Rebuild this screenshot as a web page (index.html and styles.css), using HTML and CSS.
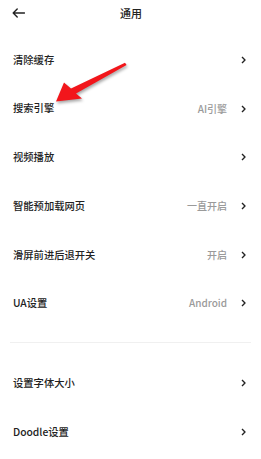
FILE: index.html
```html
<!DOCTYPE html>
<html lang="zh">
<head>
<meta charset="utf-8">
<link rel="stylesheet" href="styles.css">
</head>
<body>
<div class="page">
  <header class="header">
    <svg class="back" width="13" height="10" viewBox="0 0 13 10"><path d="M12.5 5H1.2M5.2 1L1.2 5L5.2 9" fill="none" stroke="#222" stroke-width="1.4" stroke-linecap="round" stroke-linejoin="round"/></svg>
    <div class="title">通用</div>
  </header>
  <div class="group first">
    <div class="row"><span class="label">清除缓存</span><span class="right"><svg class="chev" width="5" height="8" viewBox="0 0 5 8"><path d="M1 1L4 4L1 7" fill="none" stroke="#222" stroke-width="1.4" stroke-linejoin="round"/></svg></span></div>
    <div class="row"><span class="label">搜索引擎</span><span class="right"><span class="value">AI引擎</span><svg class="chev" width="5" height="8" viewBox="0 0 5 8"><path d="M1 1L4 4L1 7" fill="none" stroke="#222" stroke-width="1.4" stroke-linejoin="round"/></svg></span></div>
    <div class="row"><span class="label">视频播放</span><span class="right"><svg class="chev" width="5" height="8" viewBox="0 0 5 8"><path d="M1 1L4 4L1 7" fill="none" stroke="#222" stroke-width="1.4" stroke-linejoin="round"/></svg></span></div>
    <div class="row"><span class="label">智能预加载网页</span><span class="right"><span class="value">一直开启</span><svg class="chev" width="5" height="8" viewBox="0 0 5 8"><path d="M1 1L4 4L1 7" fill="none" stroke="#222" stroke-width="1.4" stroke-linejoin="round"/></svg></span></div>
    <div class="row"><span class="label">滑屏前进后退开关</span><span class="right"><span class="value">开启</span><svg class="chev" width="5" height="8" viewBox="0 0 5 8"><path d="M1 1L4 4L1 7" fill="none" stroke="#222" stroke-width="1.4" stroke-linejoin="round"/></svg></span></div>
    <div class="row"><span class="label">UA设置</span><span class="right"><span class="value">Android</span><svg class="chev" width="5" height="8" viewBox="0 0 5 8"><path d="M1 1L4 4L1 7" fill="none" stroke="#222" stroke-width="1.4" stroke-linejoin="round"/></svg></span></div>
  </div>
  <div class="divider"></div>
  <div class="group">
    <div class="row"><span class="label">设置字体大小</span><span class="right"><svg class="chev" width="5" height="8" viewBox="0 0 5 8"><path d="M1 1L4 4L1 7" fill="none" stroke="#222" stroke-width="1.4" stroke-linejoin="round"/></svg></span></div>
    <div class="row"><span class="label">Doodle设置</span><span class="right"><svg class="chev" width="5" height="8" viewBox="0 0 5 8"><path d="M1 1L4 4L1 7" fill="none" stroke="#222" stroke-width="1.4" stroke-linejoin="round"/></svg></span></div>
  </div>
  <svg class="pointer" width="261" height="120" viewBox="0 0 261 120"><polygon points="125,62.8 126.6,65 76,93.5 82,98.5 56,101.5 64,82.5 71,88.5" fill="#f2161b"/></svg>
</div>
</body>
</html>
```
FILE: styles.css
```css
* { box-sizing: border-box; }
html, body { margin: 0; padding: 0; background: #fff; }
body {
  font-family: "Noto Sans CJK SC", "Noto Sans", sans-serif;
  color: #222;
}
.page {
  position: relative;
  width: 261px;
  height: 459px;
  overflow: hidden;
}
.header {
  height: 26px;
  display: flex;
  align-items: center;
  justify-content: center;
  position: relative;
}
.back {
  position: absolute;
  left: 12px;
  top: 8px;
}
.title {
  font-size: 11px;
  font-weight: 500;
  line-height: 1;
  margin-left: 1px;
}
.group.first { padding-top: 9.6px; }
.row {
  height: 48.7px;
  display: flex;
  align-items: center;
  justify-content: space-between;
  padding: 0 15px 0 13px;
}
.label {
  font-size: 10.3px;
  font-weight: 500;
  line-height: 1;
}
.right {
  display: flex;
  align-items: center;
}
.value {
  font-size: 10px;
  color: #9a9a9a;
  line-height: 1;
  margin-right: 14px;
  font-weight: 500;
}
.chev { display: block; }
.divider {
  height: 1px;
  background: #f0f0f0;
  margin: 14.6px 10px 15.6px 10px;
}
.pointer {
  position: absolute;
  left: 0;
  top: 0;
  filter: drop-shadow(1px 2px 1.5px rgba(0,0,0,0.35));
}
```
